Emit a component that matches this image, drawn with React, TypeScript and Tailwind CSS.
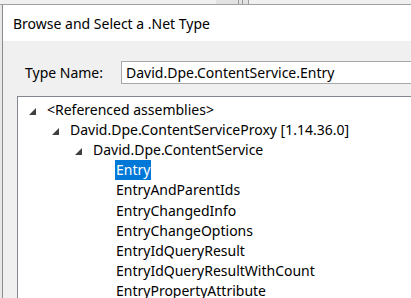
import React from 'react';

type Node = { label: string; level: number; expanded?: boolean; selected?: boolean };

const nodes: Node[] = [
  { label: '<Referenced assemblies>', level: 0, expanded: true },
  { label: 'David.Dpe.ContentServiceProxy [1.14.36.0]', level: 1, expanded: true },
  { label: 'David.Dpe.ContentService', level: 2, expanded: true },
  { label: 'Entry', level: 3, selected: true },
  { label: 'EntryAndParentIds', level: 3 },
  { label: 'EntryChangedInfo', level: 3 },
  { label: 'EntryChangeOptions', level: 3 },
  { label: 'EntryIdQueryResult', level: 3 },
  { label: 'EntryIdQueryResultWithCount', level: 3 },
  { label: 'EntryPropertyAttribute', level: 3 },
];

const indents = ['pl-[11px]', 'pl-[34px]', 'pl-[57px]', 'pl-[80px]'];

const Expander: React.FC = () => (
  <svg width="7" height="7" viewBox="0 0 7 7" className="mt-[4px]">
    <polygon points="7,0 7,7 0,7" fill="#404040" />
  </svg>
);

const TreeRow: React.FC<{ node: Node }> = ({ node }) => (
  <div className={`flex h-[20.2px] items-center whitespace-nowrap ${indents[node.level]}`}>
    <div className="flex w-[18px] shrink-0 items-center">{node.expanded ? <Expander /> : null}</div>
    {node.selected ? (
      <span className="-ml-[1px] bg-[#0078d7] pl-[1px] pr-[1px] leading-[20px] text-white">{node.label}</span>
    ) : (
      <span className="text-black">{node.label}</span>
    )}
  </div>
);

export default function App() {
  return (
    <div
      className="flex h-[298px] w-[411px] flex-col overflow-hidden bg-[#f0f0f0] text-[14px]"
      style={{ fontFamily: '"Noto Sans", "Open Sans", sans-serif' }}
    >
      {/* what shows of the window behind */}
      <div className="flex h-[5px] shrink-0 border-b border-[#a0a0a0] bg-[#f0f0f0]">
        <div className="w-[216px]" />
        <div className="w-[22px] bg-[#e2e2e2]" />
        <div className="w-[1px] bg-[#9a9a9a]" />
        <div className="w-[3px] bg-[#e2e2e2]" />
        <div className="w-[1px] bg-[#9a9a9a]" />
        <div className="w-[5px] bg-[#e2e2e2]" />
        <div className="w-[1px] bg-[#9a9a9a]" />
      </div>

      <div className="flex min-h-0 flex-1">
        <div className="w-[2px] shrink-0 bg-[#e8e8e8]" />
        <div className="flex min-w-0 flex-1 flex-col border-l border-[#8a8a8a]">
          <div className="flex h-[36px] shrink-0 items-center bg-white pl-[10px] text-black">
            Browse and Select a .Net Type
          </div>

          <div className="flex min-h-0 flex-1 flex-col pt-[20px]">
            <div className="flex h-[23px] shrink-0 items-center">
              <div className="w-[118px] shrink-0 pl-[22px] text-black">Type Name:</div>
              <div className="flex h-full flex-1 items-center whitespace-nowrap border border-r-0 border-[#a8a8a8] bg-white pl-[4px] text-black">
                David.Dpe.ContentService.Entry
              </div>
            </div>

            <div className="mt-[12px] ml-[14px] flex-1 border-t border-l border-[#828790] bg-white pt-[2px]">
              {nodes.map((n) => (
                <TreeRow key={n.label} node={n} />
              ))}
            </div>
          </div>
        </div>
      </div>
    </div>
  );
}
